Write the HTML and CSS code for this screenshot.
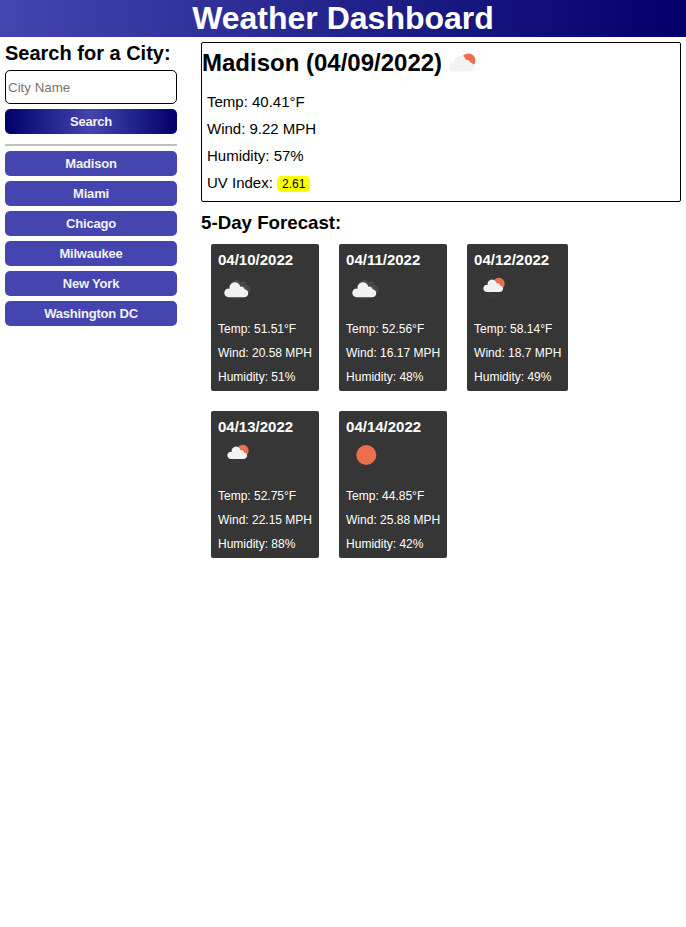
FILE: index.html
```html
<!DOCTYPE html>
<html lang="en">
<head>
<meta charset="UTF-8">
<title>Weather Dashboard</title>
<link rel="stylesheet" href="styles.css">
</head>
<body>
<svg class="defs" width="0" height="0" aria-hidden="true">
  <symbol id="cloud" viewBox="0 0 24 15" overflow="visible"><path d="M4.3 6.3a4.3 4.35 0 1 0 .01 0zM10.6 0a5.4 5.4 0 1 0 .01 0zM17 4.4a3.5 3.5 0 1 0 .01 0zM20 7a4 4 0 1 0 .01 0zM4.3 15H20V9L18 7.5L8 6L4.3 8z"/></symbol>
  <symbol id="clouds" viewBox="0 0 40 50">
    <path fill="#484848" d="M13 14Q13.5 11 16.5 10.2A4.5 4.5 0 0 1 22.5 12.3A3.8 3.8 0 0 1 28.8 15A4.3 4.3 0 0 1 31 22.8L29 23.4Z"/>
    <use href="#cloud" x="6.3" y="12.2" width="24" height="15" fill="#f2f2f0"/>
  </symbol>
  <symbol id="rain" viewBox="0 0 40 50">
    <circle cx="24.8" cy="13.7" r="5.9" fill="#ec6e4c"/>
    <use href="#cloud" x="9.3" y="9.6" width="19.8" height="12.4" fill="#f2f2f0"/>
    <path stroke="#484848" d="M16 22.500l-1 2M14.500 26l-.7 1.500M18.300 25l-.7 1.500M21.500 24.500l-.7 1.500M19.700 27l-.5 1"/>
  </symbol>
  <symbol id="sun" viewBox="0 0 40 50"><circle cx="20.3" cy="18" r="10" fill="#ec6e4c"/></symbol>
</svg>
<header class="title"><h1>Weather Dashboard</h1></header>
<main class="layout">
  <aside class="search">
    <h2>Search for a City:</h2>
    <input type="text" placeholder="City Name">
    <button class="btn go">Search</button>
    <div class="rule"></div>
    <button class="btn">Madison</button>
    <button class="btn">Miami</button>
    <button class="btn">Chicago</button>
    <button class="btn">Milwaukee</button>
    <button class="btn">New York</button>
    <button class="btn">Washington DC</button>
  </aside>
  <section class="weather">
    <article class="current">
      <h2>Madison (04/09/2022)
        <svg class="now" viewBox="0 0 30 22"><circle cx="21.4" cy="8.4" r="7" fill="#ec6e4c"/><use href="#cloud" x="1.9" y="4" width="24.6" height="15.4" fill="#f2f2f0" stroke="#fff" stroke-width="1.5" paint-order="stroke"/></svg>
      </h2>
      <p>Temp: 40.41°F</p>
      <p>Wind: 9.22 MPH</p>
      <p>Humidity: 57%</p>
      <p>UV Index: <span class="uv">2.61</span></p>
    </article>
    <h3>5-Day Forecast:</h3>
    <div class="cards">
      <article class="card"><h4>04/10/2022</h4><svg><use href="#clouds"/></svg><p>Temp: 51.51°F</p><p>Wind: 20.58 MPH</p><p>Humidity: 51%</p></article>
      <article class="card"><h4>04/11/2022</h4><svg><use href="#clouds"/></svg><p>Temp: 52.56°F</p><p>Wind: 16.17 MPH</p><p>Humidity: 48%</p></article>
      <article class="card"><h4>04/12/2022</h4><svg><use href="#rain"/></svg><p>Temp: 58.14°F</p><p>Wind: 18.7 MPH</p><p>Humidity: 49%</p></article>
      <article class="card"><h4>04/13/2022</h4><svg><use href="#rain"/></svg><p>Temp: 52.75°F</p><p>Wind: 22.15 MPH</p><p>Humidity: 88%</p></article>
      <article class="card"><h4>04/14/2022</h4><svg><use href="#sun"/></svg><p>Temp: 44.85°F</p><p>Wind: 25.88 MPH</p><p>Humidity: 42%</p></article>
    </div>
  </section>
</main>
</body>
</html>
```
FILE: styles.css
```css
* { box-sizing: border-box; margin: 0; padding: 0; }
body { font-family: Arial, "Liberation Sans", sans-serif; background: #fff; color: #000; }
.defs { position: absolute; }
.title { height: 37px; background: linear-gradient(to right, #4545b0, #000068); color: #fff; text-align: center; }
.title h1 { font-size: 32px; line-height: 37px; }
.layout { display: flex; padding: 5px; gap: 24px; }
.search { width: 172px; flex: none; display: flex; flex-direction: column; gap: 5px; }
.search h2 { font-size: 20px; line-height: 23px; white-space: nowrap; }
.search input { height: 34px; border: 1px solid #000; border-radius: 5px; padding: 0 2px; font: 13.333px Arial, "Liberation Sans", sans-serif; }
.search input::placeholder { color: #757575; }
.btn { height: 25px; border: 0; border-radius: 5px; background: #4545b0; color: #f2f2f2; font: bold 13px Arial, "Liberation Sans", sans-serif; letter-spacing: -0.2px; }
.go { background: linear-gradient(to right, #000068, #4545b0, #000068); }
.rule { height: 2px; margin-top: 5px; background: #c0c0c0; }
.weather { flex: 1; min-width: 0; }
.current { height: 160px; border: 1px solid #000; border-radius: 2px; }
.current h2 { display: flex; align-items: center; gap: 5px; font-size: 24px; line-height: 28px; height: 45px; padding-bottom: 5px; margin-bottom: 5px; }
.now { width: 30px; height: 22px; }
.current p { padding-left: 5px; font-size: 15px; line-height: 17px; margin-bottom: 10px; }
.uv { background: #ff0; border-radius: 5px; padding: 1px 5px; font-size: 12px; }
.weather h3 { font-size: 18.72px; line-height: 23px; margin-top: 9px; }
.cards { display: flex; flex-wrap: wrap; gap: 20px; padding: 10px; }
.card { height: 147px; padding: 7px; border-radius: 2px; background: #363636; color: #fff; }
.card h4 { font-size: 15px; line-height: 17px; }
.card svg { display: block; width: 40px; height: 50px; margin: 2px 0; }
.card p { font-size: 12px; line-height: 14px; margin-bottom: 10px; }
```
